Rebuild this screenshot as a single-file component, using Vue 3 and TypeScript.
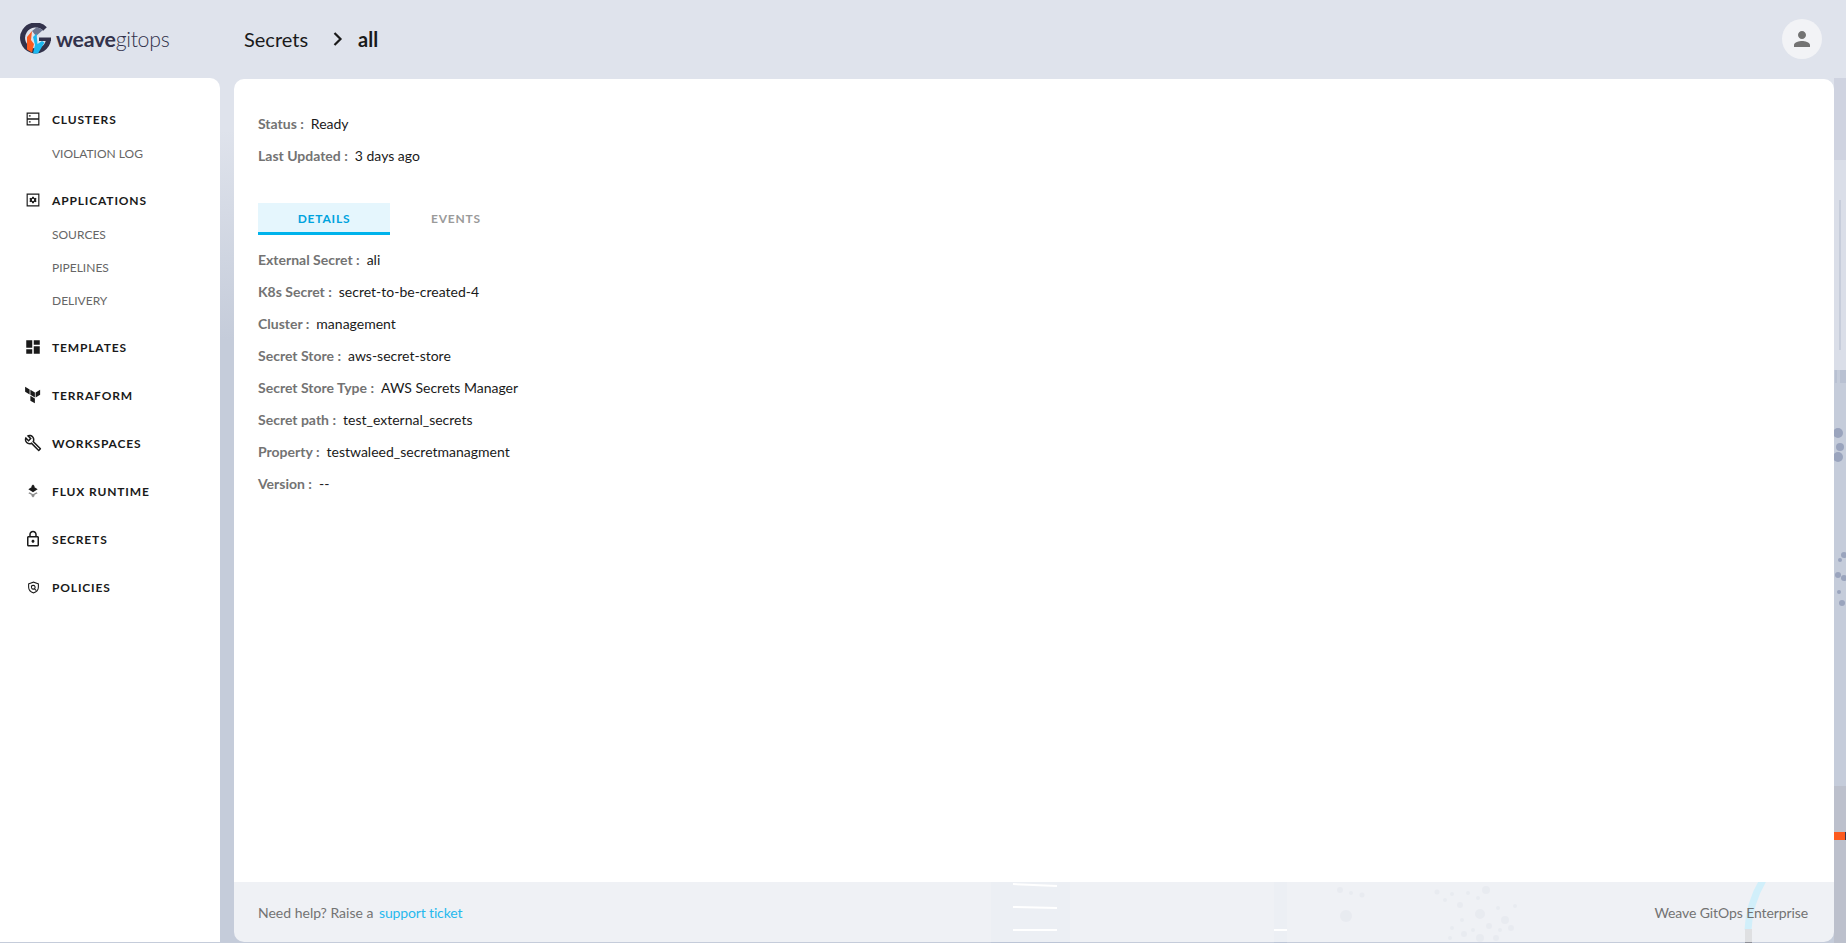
<script setup lang="ts">
interface NavItem {
  label: string
  d: string
  d2?: string
  size: number
  subs?: string[]
}

const navItems: NavItem[] = [
  {
    label: 'CLUSTERS',
    size: 14,
    d: 'M1 1h22v22H1zM3 3v7.6h18V3zM3 13.4V21h18v-7.6zM5 5.5h3v2H5zM5 16h3v2H5z',
    subs: ['VIOLATION LOG']
  },
  {
    label: 'APPLICATIONS',
    size: 14,
    d: 'M1 1h22v22H1zM3 3v18h18V3zM10.6 6.5h2.8l.4 1.6 1.5.7 1.5-.8 1.4 2.4-1.2 1.1v1l1.2 1.1-1.4 2.4-1.5-.8-1.5.7-.4 1.6h-2.8l-.4-1.6-1.5-.7-1.5.8-1.4-2.4 1.2-1.1v-1L5.8 10.4l1.4-2.4 1.5.8 1.5-.7zM12 10a2 2 0 1 0 0 4 2 2 0 0 0 0-4z',
    subs: ['SOURCES', 'PIPELINES', 'DELIVERY']
  },
  {
    label: 'TEMPLATES',
    size: 18,
    d: 'M3 13h8V3H3v10zm0 8h8v-6H3v6zm10 0h8V11h-8v10zm0-18v6h8V3h-8z'
  },
  {
    label: 'TERRAFORM',
    size: 18,
    d: 'M1.5 1l6 3.5v6.8l-6-3.5zM8.5 5l6 3.5v6.8l-6-3.5zM8.5 13l6 3.5v6.5l-6-3.5zM15.5 8.5l6-3.5v6.8l-6 3.5z'
  },
  {
    label: 'WORKSPACES',
    size: 18,
    d: 'M22.61 18.99l-9.08-9.08c.93-2.34.45-5.1-1.44-7C9.79.61 6.21.4 3.66 2.26L7.5 6.11 6.08 7.52 2.25 3.69C.39 6.23.6 9.82 2.9 12.11c1.86 1.86 4.57 2.35 6.89 1.48l9.11 9.11c.39.39 1.02.39 1.41 0l2.3-2.3c.4-.38.4-1.01 0-1.41zm-3 1.6l-9.46-9.46c-.61.45-1.29.72-2 .82-1.36.2-2.79-.21-3.83-1.25C3.37 9.76 2.93 8.5 3 7.26l3.09 3.09 4.24-4.24-3.09-3.09c1.24-.07 2.49.37 3.44 1.31 1.08 1.08 1.49 2.57 1.24 3.96-.12.71-.42 1.37-.88 1.96l9.45 9.45-.88.88z'
  },
  {
    label: 'FLUX RUNTIME',
    size: 14,
    d: 'M12 1l3 3-1 1 6 4-8 5-8-5 6-4-1-1z',
    d2: 'M6 14l6 3.5 6-3.5 2 2-6 3 1 1-3 3-3-3 1-1-6-3z'
  },
  {
    label: 'SECRETS',
    size: 18,
    d: 'M18 8h-1V6c0-2.76-2.24-5-5-5S7 3.24 7 6v2H6c-1.1 0-2 .9-2 2v10c0 1.1.9 2 2 2h12c1.1 0 2-.9 2-2V10c0-1.1-.9-2-2-2zM9 6c0-1.66 1.34-3 3-3s3 1.34 3 3v2H9V6zm9 14H6V10h12v10zm-6-3c1.1 0 2-.9 2-2s-.9-2-2-2-2 .9-2 2 .9 2 2 2z'
  },
  {
    label: 'POLICIES',
    size: 13,
    d: 'M12 1l10 3.5v7c0 5.6-4 9.8-10 11.5C6 21.300 2 17.100 2 11.500v-7zM12 3.300L4 6.100v5.400c0 4.400 3 7.800 8 9.400 5-1.600 8-5 8-9.400V6.100zM11.500 7a4.500 4.500 0 0 1 3.600 7.200l2.300 2.300-1.400 1.400-2.400-2.300A4.500 4.500 0 1 1 11.500 7zm0 2a2.500 2.500 0 1 0 0 5 2.500 2.500 0 0 0 0-5z'
  }
]

const statusRows: [string, string][] = [
  ['Status', 'Ready'],
  ['Last Updated', '3 days ago']
]

const detailRows: [string, string][] = [
  ['External Secret', 'ali'],
  ['K8s Secret', 'secret-to-be-created-4'],
  ['Cluster', 'management'],
  ['Secret Store', 'aws-secret-store'],
  ['Secret Store Type', 'AWS Secrets Manager'],
  ['Secret path', 'test_external_secrets'],
  ['Property', 'testwaleed_secretmanagment'],
  ['Version', '--']
]

// scattered dots of the background artwork, [x, y, r]
const dots: [number, number, number][] = [
  [1340, 890, 3], [1351, 893, 2], [1362, 895, 2.5], [1346, 916, 6],
  [1437, 892, 2.5], [1445, 900, 2], [1452, 894, 2], [1460, 905, 3], [1468, 893, 2],
  [1478, 898, 2], [1486, 890, 4], [1462, 920, 2], [1480, 914, 5], [1498, 908, 2],
  [1505, 920, 4], [1515, 906, 2], [1452, 928, 2], [1464, 934, 3], [1473, 930, 2],
  [1489, 926, 3], [1500, 930, 2], [1511, 928, 3], [1450, 938, 2], [1480, 938, 4],
  [1496, 938, 3], [1838, 433, 5], [1840, 447, 4], [1838, 457, 5], [1849, 482, 2],
  [1838, 575, 3], [1844, 578, 3], [1839, 592, 2], [1842, 603, 3], [1850, 612, 3],
  [1840, 560, 2], [1844, 555, 3]
]
</script>

<template>
  <div class="page">
    <svg class="artwork" width="1846" height="943" viewBox="0 0 1846 943" aria-hidden="true">
      <rect x="991" y="860" width="79" height="83" fill="#bcc5d6" />
      <rect x="1274" y="860" width="13" height="83" fill="#bcc5d6" />
      <path d="M1013 884l44 2M1013 907l44 1M1013 930h44" stroke="#fff" stroke-width="2" fill="none" />
      <path d="M1274 930h13" stroke="#fff" stroke-width="2" />
      <path d="M1763 880q-14 24-15 50" stroke="#35c4f4" stroke-width="7" fill="none" opacity=".75" />
      <rect x="1745" y="929" width="7" height="14" fill="#8d8f98" />
      <circle
        v-for="(dot, i) in dots"
        :key="i"
        :cx="dot[0]"
        :cy="dot[1]"
        :r="dot[2]"
        :fill="dot[0] > 1800 ? '#9aa4bd' : '#aeb6ca'"
      />
      <rect x="1834" y="78" width="12" height="82" fill="#cfd3e0" />
      <rect x="1834" y="160" width="12" height="210" fill="#dadee8" />
      <path d="M1849 200v150M1840 200v150" stroke="#b4bccd" stroke-width="1" />
      <rect x="1835" y="370" width="2" height="13" fill="#b9c1d2" />
      <rect x="1840" y="370" width="6" height="13" fill="#b9c1d2" />
      <rect x="1834" y="786" width="12" height="157" fill="#bcc0cc" />
      <rect x="1834" y="832" width="11" height="8" fill="#fc5a1f" />
      <rect x="1845" y="832" width="1" height="8" fill="#33354f" />
    </svg>

    <header class="top-bar">
      <div class="logo">
        <svg class="logo-mark" width="32" height="32" viewBox="0 0 32 32">
          <path d="M25 6A13 13 0 1 0 28.500 16.500" fill="none" stroke="#32324b" stroke-width="5" />
          <path d="M19 14.500h12v3.500H19z" fill="#32324b" />
          <path d="M7 14l5-6-1 9 3 4-2 8.500-5-3z" fill="#fb5a20" />
          <path d="M12 8l5-4 6 3-7 6z" fill="#6d7590" />
          <path d="M13 14l3.500-3.500 1 10.500 4.500-3 2.500 1.500L18 30.500h-5l2-8.500z" fill="#1cb7ef" />
        </svg>
        <span class="logo-text"><b>weave</b>gitops</span>
      </div>
      <nav class="crumbs">
        <span>Secrets</span>
        <svg class="chevron" width="12" height="16" viewBox="0 0 12 16">
          <path d="M2.500 2l6 6-6 6" fill="none" stroke="#1a1a1a" stroke-width="2.200" />
        </svg>
        <strong>all</strong>
      </nav>
      <button class="avatar" type="button" aria-label="Account">
        <svg width="24" height="24" viewBox="0 0 24 24">
          <path fill="#737373" d="M12 12c2.210 0 4-1.790 4-4s-1.790-4-4-4-4 1.790-4 4 1.790 4 4 4zm0 2c-2.670 0-8 1.340-8 4v2h16v-2c0-2.660-5.330-4-8-4z" />
        </svg>
      </button>
    </header>

    <div class="body-row">
      <aside class="sidebar">
        <section v-for="item in navItems" :key="item.label" class="nav-group">
          <div class="nav-main">
            <span class="nav-icon">
              <svg :width="item.size" :height="item.size" viewBox="0 0 24 24">
                <path :d="item.d" fill="#1a1a1a" fill-rule="evenodd" />
                <path v-if="item.d2" :d="item.d2" fill="#8a8a8a" />
              </svg>
            </span>
            <span>{{ item.label }}</span>
          </div>
          <div v-if="item.subs" class="nav-subs">
            <div v-for="sub in item.subs" :key="sub" class="nav-sub">{{ sub }}</div>
          </div>
        </section>
      </aside>

      <main class="panel">
        <div class="panel-content">
          <div class="status">
            <div v-for="row in statusRows" :key="row[0]" class="row">
              <span class="key">{{ row[0] }} :</span>
              <span class="value">{{ row[1] }}</span>
            </div>
          </div>
          <div class="tabs">
            <div class="tab active">DETAILS</div>
            <div class="tab">EVENTS</div>
          </div>
          <div class="details">
            <div v-for="row in detailRows" :key="row[0]" class="row">
              <span class="key">{{ row[0] }} :</span>
              <span class="value">{{ row[1] }}</span>
            </div>
          </div>
        </div>
        <footer class="panel-footer">
          <span>Need help? Raise a <a class="link">support ticket</a></span>
          <span class="brand">Weave GitOps Enterprise</span>
        </footer>
      </main>
    </div>
  </div>
</template>

<style>
html,
body {
  margin: 0;
  overflow: hidden;
}
</style>

<style scoped>
.page {
  position: relative;
  display: flex;
  flex-direction: column;
  height: 943px;
  padding-bottom: 1px;
  box-sizing: border-box;
  overflow: hidden;
  font-family: Lato, "Liberation Sans", sans-serif;
  background: linear-gradient(180deg, #dfe3ec 0, #dfe3ec 130px, #c5ccda 340px, #c5ccda 100%);
}

.artwork {
  position: absolute;
  inset: 0;
}

.top-bar {
  position: relative;
  display: flex;
  align-items: center;
  flex: 0 0 78px;
  padding-right: 24px;
}

.logo {
  display: flex;
  align-items: center;
  gap: 4px;
  width: 244px;
  padding-left: 20px;
  box-sizing: border-box;
}

.logo-text {
  font-size: 21.3px;
  font-weight: 300;
  letter-spacing: -0.3px;
  color: #32324b;
}

.logo-text b {
  font-weight: 700;
}

.crumbs {
  display: flex;
  align-items: center;
  font-size: 20px;
  color: #1a1a1a;
}

.chevron {
  margin: 0 14px 0 24px;
}

.crumbs strong {
  font-weight: 700;
}

.avatar {
  display: flex;
  align-items: center;
  justify-content: center;
  width: 40px;
  height: 40px;
  margin-left: auto;
  padding: 0;
  border: none;
  border-radius: 50%;
  background: #f2f3f6;
}

.body-row {
  position: relative;
  display: flex;
  flex: 1;
  gap: 14px;
  min-height: 0;
}

.sidebar {
  width: 220px;
  padding-top: 27px;
  box-sizing: border-box;
  background: #fff;
  border-radius: 0 10px 0 0;
}

.nav-group {
  margin-bottom: 20px;
}

.nav-main {
  display: flex;
  align-items: center;
  height: 28px;
  font-size: 12px;
  font-weight: 700;
  letter-spacing: 0.85px;
  color: #1a1a1a;
}

.nav-icon {
  display: flex;
  align-items: center;
  justify-content: center;
  width: 18px;
  margin: 0 10px 0 24px;
}

.nav-subs {
  margin: 4px 0 -4px;
}

.nav-sub {
  display: flex;
  align-items: center;
  height: 33px;
  padding-left: 52px;
  font-size: 12px;
  font-weight: 400;
  color: #666;
}

.panel {
  display: flex;
  flex: 1;
  flex-direction: column;
  margin: 1px 12px 0 0;
  border-radius: 10px;
  overflow: hidden;
}

.panel-content {
  flex: 1;
  padding: 28px 24px 0;
  background: #fff;
}

.row {
  display: flex;
  align-items: center;
  gap: 7px;
  height: 32px;
  font-size: 14px;
  color: #1a1a1a;
}

.key {
  font-weight: 700;
  color: #737373;
}

.tabs {
  display: flex;
  margin: 32px 0 8px;
}

.tab {
  width: 132px;
  height: 32px;
  box-sizing: border-box;
  font-size: 12px;
  font-weight: 700;
  letter-spacing: 0.8px;
  line-height: 32px;
  text-align: center;
  color: #9a9a9a;
}

.tab.active {
  color: #00a3de;
  background: #e5f6fd;
  border-bottom: 3px solid #00b3ec;
}

.panel-footer {
  display: flex;
  align-items: center;
  justify-content: space-between;
  flex: 0 0 60px;
  padding: 0 26px 0 24px;
  font-size: 14px;
  color: #737373;
  background: rgba(255, 255, 255, 0.72);
}

.link {
  margin-left: 2px;
  letter-spacing: -0.15px;
  color: #27b9ee;
}

.brand {
  letter-spacing: -0.1px;
}
</style>
